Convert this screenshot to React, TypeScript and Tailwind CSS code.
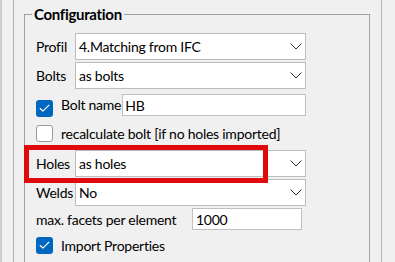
import { Check } from "lucide-react";

const Chevron = () => (
  <svg width="12" height="7" viewBox="0 0 12 7" className="mr-[3px] shrink-0">
    <path d="M0.5 0.5 L6 6 L11.5 0.5" fill="none" stroke="#303030" strokeWidth="1" />
  </svg>
);

const Combo = ({ value }: { value: string }) => (
  <div className="flex h-[27px] w-[231px] items-center justify-between border border-[#bcbcbc] bg-white pl-[3px]">
    <span className="leading-none">{value}</span>
    <Chevron />
  </div>
);

const CheckBox = ({ checked }: { checked: boolean }) =>
  checked ? (
    <div className="flex h-[17px] w-[17px] shrink-0 items-center justify-center rounded-[3px] bg-[#0067c0]">
      <Check className="h-[13px] w-[13px] text-white" strokeWidth={2} />
    </div>
  ) : (
    <div className="h-[17px] w-[17px] shrink-0 rounded-[3px] border border-[#9a9a9a] bg-white" />
  );

const Row = ({ label, children }: { label: string; children: React.ReactNode }) => (
  <div className="flex items-center">
    <span className="w-[39px] shrink-0">{label}</span>
    {children}
  </div>
);

export default function App() {
  return (
    <div className="flex h-[262px] w-[395px] overflow-hidden bg-[#f0f0f0] font-['Lato',sans-serif] text-[14px] tracking-[-0.25px] text-black">
      <div className="w-[2px] shrink-0 bg-[#cdcdcd]" />
      <div className="w-[11px] shrink-0" />
      <div className="w-px shrink-0 bg-[#b0b0b0]" />
      <div className="w-[10px] shrink-0" />
      <div className="relative shrink-0">
        <fieldset className="mt-[4px] h-[300px] w-[346px] border border-[#a0a0a0] px-0 pt-[9px]">
          <legend className="ml-[7px] px-[2px] text-[15px] font-bold leading-[20px] tracking-[-0.3px]">Configuration</legend>

          <div className="pl-[11px]">
            <Row label="Profil">
              <Combo value="4.Matching from IFC" />
            </Row>
            <div className="mt-[2px]">
              <Row label="Bolts">
                <Combo value="as bolts" />
              </Row>
            </div>

            <div className="mt-[5px] flex w-[270px] items-start">
              <div className="mt-[6px]">
                <CheckBox checked />
              </div>
              <span className="ml-[8px] whitespace-nowrap leading-[22px]">Bolt name</span>
              <div className="ml-px flex h-[22px] flex-1 items-center border border-[#c0c0c0] bg-white pl-[2px]">
                HB
              </div>
            </div>

            <div className="mt-[8px] flex items-center">
              <CheckBox checked={false} />
              <span className="ml-[8px] whitespace-nowrap leading-[17px]">recalculate bolt [if no holes imported]</span>
            </div>

            <div className="mt-[8px]">
              <Row label="Holes">
                <Combo value="as holes" />
              </Row>
            </div>
            <div className="mt-[2px]">
              <Row label="Welds">
                <Combo value="No" />
              </Row>
            </div>

            <div className="mt-[2px] flex items-center">
              <span className="w-[156px] shrink-0 whitespace-nowrap">max. facets per element</span>
              <div className="flex h-[22px] w-[110px] items-center border border-[#c0c0c0] bg-white pl-[3px]">
                1000
              </div>
            </div>

            <div className="mt-[7px] flex items-center">
              <CheckBox checked />
              <span className="ml-[8px] whitespace-nowrap leading-[17px]">Import Properties</span>
            </div>
          </div>
        </fieldset>
        <div className="pointer-events-none absolute left-0 top-[145px] h-[38px] w-[244px] border-[5px] border-[#e00a0a]" />
      </div>
      <div className="w-[11px] shrink-0" />
      <div className="w-px shrink-0 bg-[#b4b4b4]" />
    </div>
  );
}
